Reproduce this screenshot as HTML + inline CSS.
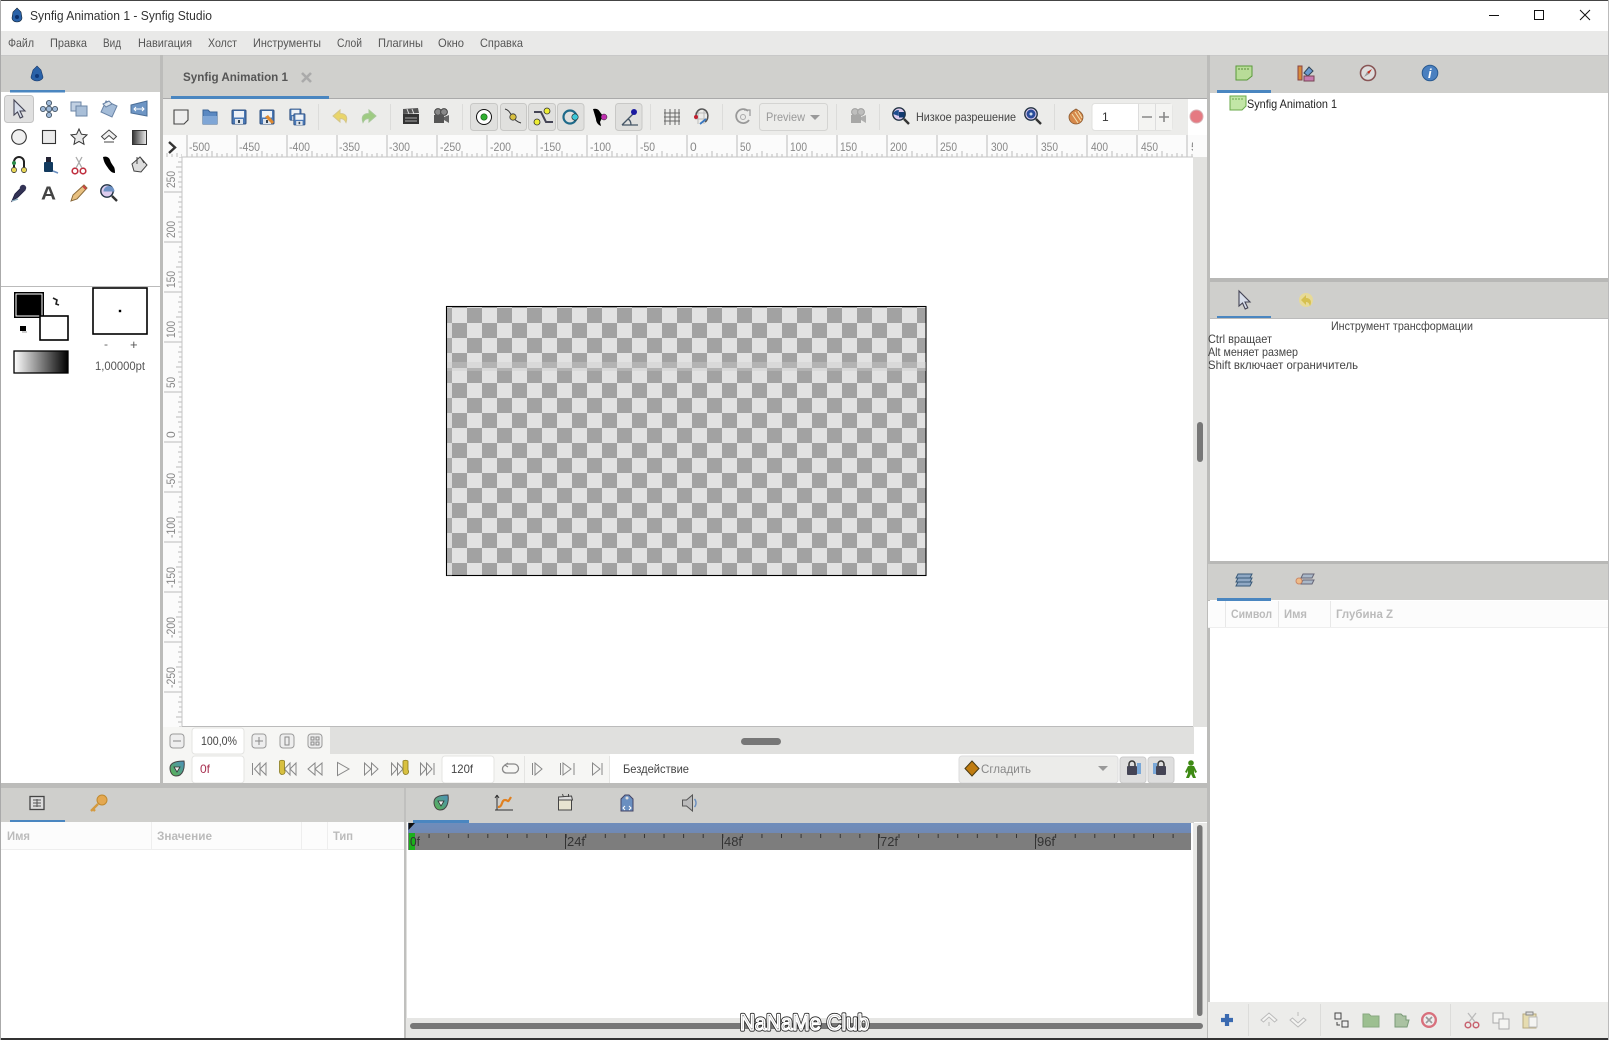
<!DOCTYPE html>
<html lang="ru"><head><meta charset="utf-8"><title>Synfig Animation 1 - Synfig Studio</title>
<style>
html,body{margin:0;padding:0;background:#fff;width:1609px;height:1040px;overflow:hidden}
svg{display:block;position:absolute;left:0;top:0;filter:blur(.3px)}
text{font-family:"Liberation Sans","Noto Sans CJK SC",sans-serif;font-size:12px;fill:#444}
.m{font-size:12px;fill:#555}
.r{font-size:12px;fill:#888}
.h{font-size:12px;font-weight:bold;fill:#bbb}
.f{font-size:13px;fill:#333}
</style></head><body>
<svg width="1609" height="1040" viewBox="0 0 1609 1040" xmlns="http://www.w3.org/2000/svg">
<defs>
<pattern id="hr" x="186.5" y="135" width="50" height="22" patternUnits="userSpaceOnUse">
<path d="M.5 0V22M5.500 19V22M10.500 18V22M15.500 19V22M20.500 18V22M25.500 16V22M30.500 18V22M35.500 19V22M40.500 18V22M45.500 19V22" stroke="#bbb" fill="none"/></pattern>
<pattern id="vr" x="164" y="191.5" width="18" height="50" patternUnits="userSpaceOnUse">
<path d="M0 .5H18M15 5.500H18M14 10.500H18M15 15.500H18M14 20.500H18M12 25.500H18M14 30.500H18M15 35.500H18M14 40.500H18M15 45.500H18" stroke="#bbb" fill="none"/></pattern>
<pattern id="chk" x="452" y="308" width="30" height="30" patternUnits="userSpaceOnUse">
<rect width="30" height="30" fill="#e2e2e2"/><rect x="15" width="15" height="15" fill="#a2a2a2"/><rect y="15" width="15" height="15" fill="#a2a2a2"/></pattern>
<pattern id="tt" x="409" y="834" width="19.58" height="4" patternUnits="userSpaceOnUse"><rect x="0" width="1" height="4" fill="#333"/></pattern>
<linearGradient id="gw" x1="0" x2="1" y1="0" y2="0"><stop offset="0" stop-color="#fff"/><stop offset="1" stop-color="#000"/></linearGradient>
<linearGradient id="gb" x1="0" x2="1" y1="0" y2="0"><stop offset="0" stop-color="#333"/><stop offset="1" stop-color="#eee"/></linearGradient>
<linearGradient id="tg" x1="0" x2="0" y1="0" y2="1"><stop offset="0" stop-color="#6f8dbb"/><stop offset="1" stop-color="#7089b4"/></linearGradient>
<linearGradient id="leaf" x1="0" x2="1" y1="1" y2="0"><stop offset="0" stop-color="#5cb548"/><stop offset="1" stop-color="#4a8fc0"/></linearGradient>
<g id="ptr"><path d="M-5-9V6l3.500-3 2.700 6 2.600-1.200L1 2h5z" fill="#d8deea" stroke="#445" stroke-width="1.100"/></g>
<g id="floppy"><rect x="-7" y="-7" width="14" height="14" rx="1" fill="#4a78b5" stroke="#2e4f80"/><rect x="-5" y="-6" width="10" height="6.500" fill="#eef2f7"/><rect x="-4" y="2" width="8" height="5" fill="#dfe5ec"/><rect x="-1" y="3" width="2" height="3" fill="#345"/></g>
<g id="folder"><path d="M-7-7h5l2 2h7v12h-14z" fill="#5b89c2" stroke="#3a6396"/><path d="M-7-1h14v8h-14z" fill="#7fa6d6"/></g>
<g id="leafi"><path d="M-7-1C-7-6-2-8 7-8 8-1 6 7-1 7-5 7-7 3-7-1z" fill="url(#leaf)" stroke="#444" stroke-width="1"/><path d="M-3-2 3-2 0 3z" fill="#eee" stroke="#333" stroke-width=".8"/></g>
<g id="cam"><circle cx="-3" cy="-5" r="3.400" fill="#888" stroke="#444"/><circle cx="3" cy="-5" r="3.400" fill="#888" stroke="#444"/><rect x="-7" y="-2" width="10" height="8" fill="#555"/><path d="M3 0 8-2V6L3 3z" fill="#666"/></g>
<g id="lens"><circle cx="-2" cy="-2" r="6.200" fill="#dce" stroke="#234" stroke-width="1.400"/><path d="M3 3 8 8" stroke="#333" stroke-width="2.400"/></g>
<g id="lock"><path d="M-3-3V-5a3 3 0 0 1 6 0V-3" fill="none" stroke="#333" stroke-width="1.500"/><rect x="-5" y="-3" width="10" height="9" rx="1" fill="#445"/></g>
</defs>

<!-- chrome -->
<rect width="1609" height="1040" fill="#fff"/>
<rect y="31" width="1609" height="24" fill="#e9e9e8"/>
<rect y="55" width="1609" height="1" fill="#c8c8c8"/>

<!-- left panel -->
<rect x="1" y="56" width="159" height="36" fill="#cfcfcc"/>
<rect x="10" y="90" width="55" height="2.500" fill="#4a86c0"/>
<rect x="1" y="286" width="159" height="1" fill="#bbb"/>
<rect x="160" y="55" width="3" height="728" fill="#bcbcba"/>

<!-- center -->
<rect x="163" y="56" width="1044" height="42" fill="#d0d0cd"/>
<rect x="163" y="98" width="1044" height="1" fill="#aaa"/>
<rect x="171" y="96" width="158" height="3" fill="#4a86c0"/>
<rect x="163" y="99" width="1025" height="36" fill="#ececea"/>
<rect x="163" y="135" width="1044" height="22" fill="#fbfbfb"/>
<rect x="164" y="135" width="1029" height="22" fill="url(#hr)"/>
<rect x="182" y="135" width="4" height="22" fill="#fbfbfb"/>
<rect x="163" y="157" width="19" height="570" fill="#fbfbfb"/>
<rect x="164" y="157" width="18" height="570" fill="url(#vr)"/>
<rect x="182" y="157" width="1011" height="569" fill="#fff"/>
<rect x="182" y="156.500" width="1011" height="1" fill="#c4c4c4"/>
<rect x="181.500" y="157" width="1" height="569" fill="#c4c4c4"/>
<rect x="182" y="726" width="1012" height="1" fill="#bbb"/>
<rect x="1193" y="157" width="14" height="570" fill="#e2e2e0"/>
<rect x="1197" y="422" width="6" height="40" rx="3" fill="#777"/>
<rect x="330" y="727" width="864" height="27" fill="#e0e0de"/>
<rect x="741" y="738" width="40" height="7" rx="3.500" fill="#777"/>
<rect x="163" y="727" width="167" height="27" fill="#f6f6f4"/>
<rect x="163" y="754" width="447" height="29" fill="#f6f6f4"/>

<!-- rulers text -->
<g>
<text class="r" x="189" y="151" textLength="21" lengthAdjust="spacingAndGlyphs">-500</text>
<text class="r" x="239" y="151" textLength="21" lengthAdjust="spacingAndGlyphs">-450</text>
<text class="r" x="289" y="151" textLength="21" lengthAdjust="spacingAndGlyphs">-400</text>
<text class="r" x="339" y="151" textLength="21" lengthAdjust="spacingAndGlyphs">-350</text>
<text class="r" x="389" y="151" textLength="21" lengthAdjust="spacingAndGlyphs">-300</text>
<text class="r" x="440" y="151" textLength="21" lengthAdjust="spacingAndGlyphs">-250</text>
<text class="r" x="490" y="151" textLength="21" lengthAdjust="spacingAndGlyphs">-200</text>
<text class="r" x="540" y="151" textLength="21" lengthAdjust="spacingAndGlyphs">-150</text>
<text class="r" x="590" y="151" textLength="21" lengthAdjust="spacingAndGlyphs">-100</text>
<text class="r" x="640" y="151" textLength="15" lengthAdjust="spacingAndGlyphs">-50</text>
<text class="r" x="690" y="151">0</text>
<text class="r" x="740" y="151" textLength="11" lengthAdjust="spacingAndGlyphs">50</text>
<text class="r" x="790" y="151" textLength="17" lengthAdjust="spacingAndGlyphs">100</text>
<text class="r" x="840" y="151" textLength="17" lengthAdjust="spacingAndGlyphs">150</text>
<text class="r" x="890" y="151" textLength="17" lengthAdjust="spacingAndGlyphs">200</text>
<text class="r" x="940" y="151" textLength="17" lengthAdjust="spacingAndGlyphs">250</text>
<text class="r" x="991" y="151" textLength="17" lengthAdjust="spacingAndGlyphs">300</text>
<text class="r" x="1041" y="151" textLength="17" lengthAdjust="spacingAndGlyphs">350</text>
<text class="r" x="1091" y="151" textLength="17" lengthAdjust="spacingAndGlyphs">400</text>
<text class="r" x="1141" y="151" textLength="17" lengthAdjust="spacingAndGlyphs">450</text>
<text class="r" x="1191" y="151">5</text>
<rect x="1193" y="135" width="14" height="22" fill="#fbfbfb"/>
<text class="r" transform="translate(175,188) rotate(-90)" textLength="17" lengthAdjust="spacingAndGlyphs">250</text>
<text class="r" transform="translate(175,238) rotate(-90)" textLength="17" lengthAdjust="spacingAndGlyphs">200</text>
<text class="r" transform="translate(175,288) rotate(-90)" textLength="17" lengthAdjust="spacingAndGlyphs">150</text>
<text class="r" transform="translate(175,338) rotate(-90)" textLength="17" lengthAdjust="spacingAndGlyphs">100</text>
<text class="r" transform="translate(175,388) rotate(-90)" textLength="11" lengthAdjust="spacingAndGlyphs">50</text>
<text class="r" transform="translate(175,438) rotate(-90)">0</text>
<text class="r" transform="translate(175,488) rotate(-90)" textLength="15" lengthAdjust="spacingAndGlyphs">-50</text>
<text class="r" transform="translate(175,538) rotate(-90)" textLength="21" lengthAdjust="spacingAndGlyphs">-100</text>
<text class="r" transform="translate(175,588) rotate(-90)" textLength="21" lengthAdjust="spacingAndGlyphs">-150</text>
<text class="r" transform="translate(175,638) rotate(-90)" textLength="21" lengthAdjust="spacingAndGlyphs">-200</text>
<text class="r" transform="translate(175,688) rotate(-90)" textLength="21" lengthAdjust="spacingAndGlyphs">-250</text>
</g>
<path d="M169 142 L175 147.500 L169 153" fill="none" stroke="#333" stroke-width="2.400"/>

<!-- canvas checker -->
<rect x="446.500" y="306.500" width="479.500" height="269" fill="url(#chk)" stroke="#000" stroke-width="1.100"/>
<rect x="447" y="362" width="479" height="9" fill="#ccc" opacity=".4"/>
<rect x="447" y="307" width="5" height="269" fill="#c8c8c8" opacity=".25"/>

<!-- title bar -->
<path d="M17 8l4 4 1 6c0 2-2 4-5 4s-5-2-5-4l1-6z" fill="#2a62a8" stroke="#123" stroke-width=".6"/><circle cx="17" cy="17" r="2" fill="#0b2f6a"/>
<text x="30" y="20" style="font-size:13px;fill:#333" textLength="182" lengthAdjust="spacingAndGlyphs">Synfig Animation 1 - Synfig Studio</text>
<path d="M1489 15.500H1499" stroke="#111" stroke-width="1"/>
<rect x="1534.500" y="10.500" width="9" height="9" fill="none" stroke="#111"/>
<path d="M1580 10 L1590 20 M1590 10 L1580 20" stroke="#111" stroke-width="1"/>

<!-- menu -->
<text class="m" x="8" y="47" textLength="26" lengthAdjust="spacingAndGlyphs">Файл</text>
<text class="m" x="50" y="47" textLength="37" lengthAdjust="spacingAndGlyphs">Правка</text>
<text class="m" x="103" y="47" textLength="18" lengthAdjust="spacingAndGlyphs">Вид</text>
<text class="m" x="138" y="47" textLength="54" lengthAdjust="spacingAndGlyphs">Навигация</text>
<text class="m" x="208" y="47" textLength="29" lengthAdjust="spacingAndGlyphs">Холст</text>
<text class="m" x="253" y="47" textLength="68" lengthAdjust="spacingAndGlyphs">Инструменты</text>
<text class="m" x="337" y="47" textLength="25" lengthAdjust="spacingAndGlyphs">Слой</text>
<text class="m" x="378" y="47" textLength="45" lengthAdjust="spacingAndGlyphs">Плагины</text>
<text class="m" x="438" y="47" textLength="26" lengthAdjust="spacingAndGlyphs">Окно</text>
<text class="m" x="480" y="47" textLength="43" lengthAdjust="spacingAndGlyphs">Справка</text>

<!-- left tab icon -->
<path d="M37 66l4 4 2 7c0 2-3 4-6 4s-6-2-6-4l2-7z" fill="#2a62a8" stroke="#1a3a6a" stroke-width=".6"/><circle cx="37" cy="76" r="2" fill="#103a7a"/>
<!-- tab label -->
<text x="183" y="81" style="font-size:12px;font-weight:bold;fill:#555" textLength="105" lengthAdjust="spacingAndGlyphs">Synfig Animation 1</text>
<path d="M302 73 L311 82 M311 73 L302 82" stroke="#aaa" stroke-width="2.600"/>

<!-- tool grid -->
<rect x="4.500" y="95.500" width="29" height="27" rx="3" fill="#e0e0e0" stroke="#c4c4c4"/>
<use href="#ptr" x="19" y="109"/>
<g transform="translate(49,109)" stroke="#456" fill="#9fb9d8" stroke-width=".9"><path d="M-5 0H5M0-5V5" stroke-width="3" stroke="#b5c8de"/><circle cx="0" cy="-6" r="2.600"/><circle cx="0" cy="6" r="2.600"/><circle cx="-6" cy="0" r="2.600"/><circle cx="6" cy="0" r="2.600"/><circle r="2.800"/></g>
<g transform="translate(79,109)" stroke="#6a84a6" fill="#c1d0e2"><rect x="-8" y="-7" width="10" height="9"/><rect x="-3" y="-3" width="11" height="10" fill="#a9bfd8"/></g>
<g transform="translate(109,109)" stroke="#6a84a6" fill="#a4bcd8"><path d="M-3-8 8-3 3 8-8 3z"/><path d="M-6-5 0-8 3-5-3-2z" fill="#dfe7f0"/></g>
<g transform="translate(139,109)"><path d="M-8-4 8-8V7L-8 4z" fill="#6d95c4" stroke="#4a6d96"/><path d="M-5 0H5M-3-2-5 0-3 2M3-2 5 0 3 2" stroke="#fff" fill="none"/></g>
<circle cx="19" cy="137" r="7.300" fill="#f0f0f0" stroke="#333" stroke-width="1.100"/>
<rect x="42.500" y="130.500" width="13" height="13" fill="#ebebeb" stroke="#333" stroke-width="1.100"/>
<path d="M79 129l2.400 5.200 5.600.7-4.100 3.800 1.100 5.600-5-2.800-5 2.800 1.100-5.600-4.100-3.800 5.600-.7z" fill="#e8e8e8" stroke="#333"/>
<path d="M109 130l7.500 6.500-3 3-4.500-4-4.500 4-3-3z M104 142h10" fill="#f0f0f0" stroke="#444"/>
<rect x="132.500" y="130.500" width="14" height="14" fill="url(#gb)" stroke="#333"/>
<g transform="translate(19,165)"><path d="M-5 8V-3a5 5 0 0 1 10 0V8" fill="none" stroke="#222" stroke-width="2"/><circle cx="-5" cy="5" r="2.600" fill="#e6d455" stroke="#333" stroke-width=".7"/><circle cx="5" cy="5" r="2.600" fill="#e6d455" stroke="#333" stroke-width=".7"/><circle cx="-5" cy="-2" r="2" fill="#2a8a4a"/></g>
<g transform="translate(49,165)"><rect x="-5" y="-3" width="9" height="10" rx="1" fill="#123a5e"/><rect x="-3" y="-8" width="5" height="5" fill="#223"/><path d="M4 6 9 8" stroke="#6a8fc0" stroke-width="1.500"/></g>
<g transform="translate(79,165)" fill="none" stroke="#c03040" stroke-width="1.600"><circle cx="-4" cy="6" r="2.800"/><circle cx="4" cy="6" r="2.800"/><path d="M-3 3 3-8M3 3-3-8" stroke="#aaa" stroke-width="1.300"/></g>
<path d="M103 157c3-1 6 0 7 3 1 3 2 4 4 7 1 2 1 5 1 6-3 0-5-2-7-5-2-3-4-5-5-11z" fill="#000"/>
<g transform="translate(139,165)"><path d="M-7-1 1-8 8 0 2 7-5 6z" fill="#ddd" stroke="#444"/><path d="M-2-8V-1M2-7l3 5" stroke="#444"/></g>
<g transform="translate(19,193)"><path d="M-7 8-4 1 3-6 6-3-1 4z" fill="#335" stroke="#224"/><circle cx="4" cy="-5" r="3.200" fill="#335"/><path d="M-7 8-1 6" stroke="#8ab" stroke-width="1.200"/></g>
<text x="41" y="199.500" style="font-size:18px;font-weight:bold;fill:#444" textLength="15" lengthAdjust="spacingAndGlyphs">A</text>
<g transform="translate(79,193)"><path d="M-8 8-6 2 5-8 8-5-2 6z" fill="#e8c080" stroke="#8a6a3a"/><path d="M4-7 7-4" stroke="#c44" stroke-width="2"/></g>
<use href="#lens" x="109" y="193"/><path d="M103.500 191.500a5 5 0 0 1 11 0z" fill="#6f93c6"/>

<!-- colors -->
<rect x="15" y="293" width="28" height="24" fill="#000" stroke="#000" stroke-width="2"/>
<rect x="16" y="294" width="26" height="22" fill="#000" stroke="#fff" stroke-width="1"/>
<rect x="40" y="316" width="28" height="24" fill="#fff" stroke="#000" stroke-width="1.600"/>
<path d="M53 298l4 2-1 4 3 1" fill="none" stroke="#222" stroke-width="1.600"/>
<rect x="20" y="326" width="6" height="5" fill="#000"/><rect x="22" y="331" width="5" height="2" fill="#ccc"/>
<rect x="14" y="351" width="54" height="22" fill="url(#gw)" stroke="#000" stroke-width="1.300"/>
<rect x="93" y="288" width="54" height="46" fill="#fff" stroke="#000" stroke-width="1.600"/>
<rect x="118.800" y="309.800" width="2.400" height="2.400" fill="#000"/>
<text x="104" y="348" style="fill:#666">-</text>
<text x="130" y="349" style="font-size:13px;fill:#555">+</text>
<text x="95" y="370" style="fill:#555" textLength="50" lengthAdjust="spacingAndGlyphs">1,00000pt</text>

<!-- toolbar -->
<g transform="translate(181,117)"><path d="M-7-7H7V3L3 7H-7z" fill="#eee" stroke="#444" stroke-width="1.100"/></g>
<use href="#folder" x="210" y="117"/>
<use href="#floppy" x="239" y="117"/>
<use href="#floppy" x="267" y="117"/><path d="M265 117 l7 7 2-2-6-7z" fill="#e08a30"/>
<g transform="translate(297,117) scale(.8)"><use href="#floppy" x="-2" y="-3"/><use href="#floppy" x="3" y="3"/></g>
<path d="M318.500 104V130M390.500 104V130M462.500 104V130M650.500 104V130M722.500 104V130M836.500 104V130M879.500 104V130M1054.500 104V130" stroke="#dcdcda"/>
<path d="M333 116l7-6v3.500c6 0 8 3.500 6 9-1.500-3-3-4-6-4v3.500z" fill="#e9d56a" stroke="#d4c68a"/>
<path d="M376 116l-7-6v3.500c-6 0-8 3.500-6 9 1.500-3 3-4 6-4v3.500z" fill="#9ecb82" stroke="#a8c89a"/>
<g transform="translate(411,117)"><rect x="-8" y="-3" width="16" height="10" fill="#333"/><path d="M-8-8 7-9 8-4-8-3z" fill="#555"/><path d="M-4-8-2-3M1-8 3-3" stroke="#ddd"/><path d="M-6 1H6M-6 4H6" stroke="#aaa"/></g>
<use href="#cam" x="441" y="117"/>
<g fill="#e0e0de" stroke="#c8c8c6"><rect x="470.500" y="103.500" width="27" height="27" rx="3"/><rect x="500.500" y="103.500" width="26" height="27" rx="3"/><rect x="528.500" y="103.500" width="27" height="27" rx="3"/><rect x="557.500" y="103.500" width="26.500" height="27" rx="3"/><rect x="615.500" y="103.500" width="26.500" height="27" rx="3"/></g>
<circle cx="484" cy="117" r="7.500" fill="#fff" stroke="#111"/><circle cx="484" cy="117" r="3.200" fill="#2fb02f" stroke="#1a5a1a" stroke-width=".6"/>
<path d="M505 109c4 1 5 4 7 7 2 3 5 6 9 7" fill="none" stroke="#333"/><circle cx="513" cy="117" r="3.200" fill="#d8c040" stroke="#333" stroke-width=".8"/>
<path d="M534 112h7l5 10h7" fill="none" stroke="#445" stroke-width="2"/><circle cx="547" cy="111" r="3" fill="#ee3" stroke="#333" stroke-width=".8"/><circle cx="537" cy="122" r="3" fill="#ee3" stroke="#333" stroke-width=".8"/>
<circle cx="570" cy="117" r="6.500" fill="none" stroke="#1e6a8a" stroke-width="2.200"/><circle cx="575" cy="117" r="3.200" fill="#3cc8d8" stroke="#222" stroke-width=".6"/>
<path d="M593 109c4-1 6 1 7 3l3 4-3 6 1 4c-3-1-5-4-5-7z" fill="#000"/><circle cx="604" cy="117" r="3" fill="#c030b0" stroke="#222" stroke-width=".5"/>
<path d="M622 125h16M622 125 l12-12M631 125c0-3-1-5-3-6" fill="none" stroke="#456" stroke-width="1.300"/><circle cx="634" cy="112" r="3" fill="#1a1aa0"/>
<path d="M665 109V125M670 109V125M675 109V125M679 109V125M664 113H680M664 117H680M664 121H680" stroke="#666" fill="none"/>
<g transform="translate(701,117)"><path d="M-6-4H6M-6 2H6M-3-7V7M3-7V7" stroke="#bbb"/><path d="M-5 0a6 7 0 1 1 9 5" fill="none" stroke="#555" stroke-width="1.500"/><circle cx="-5" cy="0" r="2" fill="#c02030"/><path d="M5 2-1 7" stroke="#3a78c0" stroke-width="1.800"/></g>
<g transform="translate(743,117)"><path d="M5-6A7 7 0 1 0 6 3" fill="none" stroke="#999" stroke-width="1.800"/><path d="M1-7H7V-1" fill="none" stroke="#999" stroke-width="1.200"/><circle r="2.500" fill="none" stroke="#aaa"/></g>
<rect x="759.500" y="103.500" width="68" height="27" rx="3" fill="#ececea" stroke="#d4d4d2"/>
<text x="766" y="121" style="fill:#999" textLength="39" lengthAdjust="spacingAndGlyphs">Preview</text>
<path d="M810 115h10l-5 5z" fill="#999"/>
<use href="#cam" x="858" y="117" opacity=".45"/>
<use href="#lens" x="901" y="116"/><path d="M899 112h5.500v5.500h-5.500z" fill="#123a70"/><path d="M893 114a6 6 0 0 1 5.800-4v6z" fill="#1f4f90"/>
<text x="916" y="121" style="fill:#444" textLength="100" lengthAdjust="spacingAndGlyphs">Низкое разрешение</text>
<use href="#lens" x="1033" y="116"/><circle cx="1031" cy="114" r="4.500" fill="#2a4c9a"/><circle cx="1031" cy="114" r="1.500" fill="#cde"/>
<g transform="translate(1076,117)"><path d="M0-8c5 3 7 5 7 8 0 4-3 7-7 7s-7-3-7-7c0-3 2-5 7-8z" fill="#d6884a" stroke="#8a5a30" stroke-width=".8"/><path d="M-4-3 2 6M-1-5 5 4M2-6 6 1" stroke="#f4e0b0" fill="none"/></g>
<rect x="1092" y="103.500" width="80" height="27" rx="3" fill="#fff" stroke="#e0e0de"/>
<rect x="1138" y="104" width="34" height="26" fill="#f4f4f2"/>
<path d="M1138.500 104V130M1155.500 104V130" stroke="#ddd"/>
<text x="1102" y="121" style="fill:#333">1</text>
<path d="M1142 117H1152M1159 117H1169M1164 112V122" stroke="#888" stroke-width="1.600"/>
<circle cx="1196.500" cy="116.500" r="6.500" fill="#e57a82" stroke="#d8b0b4"/>

<!-- zoom row -->
<g fill="#eee" stroke="#999"><rect x="170" y="734" width="14" height="14" rx="3"/><rect x="252" y="734" width="14" height="14" rx="3"/><rect x="280" y="734" width="14" height="14" rx="3"/><rect x="308" y="734" width="14" height="14" rx="3"/></g>
<path d="M173 741H181M255 741H263M259 737V745M285 737H289V745H285zM311 737h3v3h-3zM316 737h3v3h-3zM311 742h3v3h-3zM316 742h3v3h-3z" stroke="#888" fill="none"/>
<rect x="192" y="728" width="52" height="26" rx="3" fill="#fff" stroke="#e4e4e2"/>
<text x="201" y="745" style="fill:#444" textLength="36" lengthAdjust="spacingAndGlyphs">100,0%</text>

<!-- play row -->
<use href="#leafi" x="177" y="769"/>
<rect x="192" y="756" width="52" height="27" rx="3" fill="#fff" stroke="#e4e4e2"/>
<text x="200" y="773" style="fill:#a83050" textLength="10" lengthAdjust="spacingAndGlyphs">0f</text>
<g fill="#f6f6f4" stroke="#888" stroke-width="1">
<path d="M252.500 763V775M260 763 254.500 769 260 775ZM266 763 260 769 266 775Z"/>
<path d="M290 763 284.500 769 290 775ZM296 763 290 769 296 775Z"/>
<path d="M315 763 308 769 315 775ZM322 763 315 769 322 775Z"/>
<path d="M337.500 762.500V775.500L349 769Z"/>
<path d="M364.500 763 371 769 364.500 775ZM371.500 763 378 769 371.500 775Z"/>
<path d="M391.500 763 397 769 391.500 775ZM397.500 763 403 769 397.500 775Z"/>
<path d="M420.500 763 426 769 420.500 775ZM426.500 763 432 769 426.500 775ZM434 763V775"/>
<path d="M532.500 763V775M535 763 542 769 535 775Z"/>
<path d="M560.500 763V775M563 763 571 769 563 775ZM574 763V775"/>
<path d="M592.500 763 600 769 592.500 775ZM602 763V775"/>
</g>
<path d="M279.500 761c1-1 4-1 5 0v9a2.800 2.800 0 1 1-5 2z" fill="#d8c040" stroke="#887a20" stroke-width=".8"/>
<path d="M403 761c1-1 4-1 5 0v9a2.800 2.800 0 1 1-5 2z" fill="#d8c040" stroke="#887a20" stroke-width=".8"/>
<rect x="442" y="756" width="52" height="27" rx="3" fill="#fff" stroke="#e4e4e2"/>
<text x="451" y="773" style="fill:#444" textLength="22" lengthAdjust="spacingAndGlyphs">120f</text>
<path d="M507 764h7a4 4 0 0 1 0 9h-7a4 4 0 0 1-1-8M508 763l-3 2 3 2" fill="none" stroke="#888" stroke-width="1.300"/>
<path d="M524.500 756V783" stroke="#e4e4e2"/><path d="M609.500 756V783" stroke="#e4e4e2"/>
<text x="623" y="773" style="fill:#444" textLength="66" lengthAdjust="spacingAndGlyphs">Бездействие</text>
<rect x="959" y="756" width="159" height="27" rx="3" fill="#ececea" stroke="#ddd"/>
<path d="M972 761 979 768.500 972 776 965 768.500Z" fill="#c07c10" stroke="#4a3a10"/>
<text x="981" y="773" style="fill:#888" textLength="50" lengthAdjust="spacingAndGlyphs">Сгладить</text>
<path d="M1098 766h10l-5 5z" fill="#999"/>
<rect x="1120" y="757" width="26" height="26" rx="3" fill="#dedede" stroke="#ccc"/>
<rect x="1148" y="757" width="26" height="26" rx="3" fill="#dedede" stroke="#ccc"/>
<rect x="1137" y="763" width="4" height="11" fill="#7aa8d8"/><use href="#lock" x="1132" y="769"/>
<rect x="1153" y="763" width="4" height="11" fill="#7aa8d8"/><use href="#lock" x="1161" y="769"/>
<g transform="translate(1191,769)" fill="#3e8a14"><circle cy="-6" r="2.800"/><path d="M-3-3H3L6 3 4 4 3 1V4L5 9H2L0 5-2 9H-5L-3 4V1L-4 4-6 3Z"/></g>

<!-- separators lower -->
<rect y="783" width="1207" height="5" fill="#bcbcba"/>
<rect x="1" y="788" width="403" height="34" fill="#cfcfcc"/>
<rect x="10" y="820" width="55" height="2.500" fill="#4a86c0"/>
<rect x="1" y="822" width="403" height="27" fill="#fcfcfc"/>
<rect x="1" y="849" width="403" height="1" fill="#eee"/>
<path d="M151.500 822V849M301.500 822V849M327.500 822V849" stroke="#eee"/>
<rect x="404" y="788" width="2.500" height="250" fill="#c0c0be"/>
<rect x="406" y="788" width="801" height="34" fill="#cfcfcc"/>
<text class="h" x="7" y="840" textLength="23" lengthAdjust="spacingAndGlyphs">Имя</text>
<text class="h" x="157" y="840" textLength="55" lengthAdjust="spacingAndGlyphs">Значение</text>
<text class="h" x="333" y="840" textLength="20" lengthAdjust="spacingAndGlyphs">Тип</text>
<g transform="translate(37,803)"><rect x="-7" y="-6.500" width="14" height="13" fill="#ddd" stroke="#444" stroke-width="1.300"/><path d="M-4-3H4M-4 0H4M-4 3H4M0-4V4" stroke="#555"/></g>
<g transform="translate(99,803)"><circle cx="3" cy="-3" r="5" fill="#e4a850" stroke="#c08a30"/><path d="M-1 1-8 8M-6 6-4 8" stroke="#d49a40" stroke-width="2.400"/></g>

<!-- timeline -->
<rect x="408" y="820" width="786" height="3" fill="#cfcfcc"/>
<rect x="413" y="820" width="56" height="3" fill="#4a86c0"/>
<rect x="408" y="823" width="783" height="10" fill="url(#tg)"/>
<rect x="408" y="833" width="783" height="17" fill="#7d7d7d"/>
<rect x="409" y="833" width="6" height="17" fill="#1cb01c"/>
<path d="M408.500 823H415L408.500 830Z" fill="#111"/>
<rect x="425" y="834" width="760" height="4" fill="url(#tt)"/>
<path d="M565.500 834V849M722.500 834V849M878.500 834V849M1035.500 834V849" stroke="#333"/>
<text class="f" x="410" y="846" textLength="10" lengthAdjust="spacingAndGlyphs">0f</text>
<text class="f" x="567" y="846" textLength="18" lengthAdjust="spacingAndGlyphs">24f</text>
<text class="f" x="724" y="846" textLength="18" lengthAdjust="spacingAndGlyphs">48f</text>
<text class="f" x="880" y="846" textLength="18" lengthAdjust="spacingAndGlyphs">72f</text>
<text class="f" x="1037" y="846" textLength="18" lengthAdjust="spacingAndGlyphs">96f</text>
<rect x="1193" y="823" width="14" height="215" fill="#e8e8e6"/>
<rect x="1197" y="825" width="5.500" height="191" rx="2.700" fill="#777"/>
<rect x="406" y="1018" width="801" height="20" fill="#e6e6e4"/>
<rect x="410" y="1023" width="793" height="6" rx="3" fill="#777"/>
<use href="#leafi" x="441" y="803"/>
<g transform="translate(504,803)"><path d="M-7-8V7H8M-9 7H9M-7-8-9-5M-7-8-5-5" fill="none" stroke="#333"/><path d="M-6 4C-1 4-3-3 1-3S3 1 7-6" fill="none" stroke="#e08020" stroke-width="2.200"/></g>
<g transform="translate(565.500,803)"><rect x="-7" y="-3" width="13" height="10" fill="#e8e4d0" stroke="#444"/><path d="M-7-6 6-7 7-3-7-3zM-3-9-2-6M3-9 3-6" fill="#ddd" stroke="#444"/></g>
<g transform="translate(627,803)"><path d="M-6-4-2-8H2L6-4V8H-6Z" fill="#6a8fc0" stroke="#446"/><path d="M-2 3-4 5-2 7M2 3 4 5 2 7" stroke="#fff" fill="none"/><circle cy="-5" r="1.500" fill="#ddd"/></g>
<g transform="translate(689.500,803)"><path d="M-7-3H-3L3-8V8L-3 3H-7Z" fill="#bbb" stroke="#555"/><path d="M5-4a6 6 0 0 1 0 8" fill="none" stroke="#6a8fc0" stroke-width="1.400"/></g>

<!-- right panels -->
<rect x="1207" y="55" width="3" height="985" fill="#bcbcba"/>
<rect x="1210" y="56" width="398" height="37" fill="#cfcfcc"/>
<rect x="1217" y="90" width="54" height="3" fill="#4a86c0"/>
<rect x="1210" y="278" width="398" height="4" fill="#b8b8b6"/>
<rect x="1210" y="282" width="398" height="36" fill="#cfcfcc"/>
<rect x="1217" y="316" width="54" height="3" fill="#4a86c0"/>
<rect x="1208" y="318" width="400" height="1" fill="#bbb"/>
<rect x="1210" y="561" width="398" height="3.500" fill="#b8b8b6"/>
<rect x="1208" y="564" width="400" height="36" fill="#cfcfcc"/>
<rect x="1217" y="598" width="54" height="3" fill="#4a86c0"/>
<rect x="1208" y="601" width="400" height="26" fill="#fcfcfc"/>
<rect x="1208" y="627" width="400" height="1" fill="#eee"/>
<path d="M1225.500 601V627M1278.500 601V627M1330.500 601V627" stroke="#e8e8e8"/>
<text class="h" x="1231" y="618" textLength="41" lengthAdjust="spacingAndGlyphs">Символ</text>
<text class="h" x="1284" y="618" textLength="23" lengthAdjust="spacingAndGlyphs">Имя</text>
<text class="h" x="1336" y="618" textLength="57" lengthAdjust="spacingAndGlyphs">Глубина Z</text>
<g transform="translate(1244,73)"><path d="M-8-7H8V3L3 7H-8Z" fill="#b8dc98" stroke="#5a9a3a"/><path d="M-6-4H6" stroke="#5a8a3a" stroke-dasharray="2 1"/></g>
<g transform="translate(1306,73)"><rect x="-8" y="-7" width="4" height="14" fill="#d88a3a" stroke="#844"/><path d="M-2 0 3-6 7-2 2 3z" fill="#6a9ad0" stroke="#345"/><rect x="-2" y="3" width="10" height="5" fill="#c87ab0" stroke="#745"/></g>
<g transform="translate(1368,73)"><circle r="7.500" fill="#ddd" stroke="#855" stroke-width="1.600"/><path d="M4-4-1-1 1 1z" fill="#c03020"/><path d="M-4 4-1-1 1 1z" fill="#999"/></g>
<g transform="translate(1430,73)"><circle r="7.800" fill="#4a80c0" stroke="#2a5a90"/><text x="-2" y="5" style="font-size:13px;font-weight:bold;font-style:italic;fill:#fff">i</text></g>
<path d="M1230 96H1246V106L1242 110H1230Z" fill="#c2e6a6" stroke="#6aa84a"/><path d="M1232 99H1244" stroke="#6aa84a" stroke-dasharray="2 1"/>
<text x="1247" y="108" style="font-size:12px;fill:#222" textLength="90" lengthAdjust="spacingAndGlyphs">Synfig Animation 1</text>
<use href="#ptr" x="1244" y="300"/>
<g transform="translate(1306,300)"><circle r="7" fill="#ecdc8a" opacity=".8"/><path d="M-5 0 0-5V-2C5-2 6 2 4 6 3 3 2 2 0 2V5Z" fill="#d6c050"/></g>
<text x="1331" y="330" style="font-size:12px;fill:#444" textLength="142" lengthAdjust="spacingAndGlyphs">Инструмент трансформации</text>
<text x="1208" y="343" style="font-size:12px;fill:#444" textLength="64" lengthAdjust="spacingAndGlyphs">Ctrl вращает</text>
<text x="1208" y="356" style="font-size:12px;fill:#444" textLength="90" lengthAdjust="spacingAndGlyphs">Alt меняет размер</text>
<text x="1208" y="369" style="font-size:12px;fill:#444" textLength="150" lengthAdjust="spacingAndGlyphs">Shift включает ограничитель</text>
<g transform="translate(1244,581)" fill="#8fa8c4" stroke="#3a5a78"><path d="M-6-7H8L6-3H-8Z"/><path d="M-6-3H8L6 1H-8Z"/><path d="M-6 1H8L6 5H-8Z"/></g>
<g transform="translate(1306,581)" fill="#aab8c8" stroke="#667"><path d="M-3-7H8L6-3H-5Z"/><path d="M-3-1H8L6 3H-5Z"/><circle cx="-7" cy="0" r="3" fill="#eebb88" stroke="#c86"/></g>

<!-- right bottom toolbar -->
<rect x="1208" y="1002" width="400" height="36" fill="#ececea"/>
<path d="M1248.500 1004V1036M1320.500 1004V1036M1450.500 1004V1036" stroke="#dcdcda"/>
<path d="M1227 1014v12M1221 1020h12" stroke="#3a6ab0" stroke-width="4.200"/>
<path d="M1269 1013l8 7-2.500 2-5.500-5-5.500 5-2.500-2zM1269 1022v4" fill="#f4f4f2" stroke="#bbb"/>
<path d="M1298 1027l8-7-2.500-2-5.500 5-5.500-5-2.500 2zM1298 1012v4" fill="#f4f4f2" stroke="#bbb"/>
<g fill="#eee" stroke="#444"><rect x="1335" y="1013" width="6" height="6"/><rect x="1342" y="1021" width="6" height="6"/></g>
<path d="M1337 1022v3h3" fill="none" stroke="#444"/>
<path d="M1363 1014h6l2 2h8v11h-16z" fill="#9cbf90" stroke="#88a880"/>
<path d="M1395 1014h6l2 2h3v4h3l-2 7h-12z" fill="#aac2a2" stroke="#7a9a78"/>
<circle cx="1429" cy="1020" r="6.800" fill="#eee" stroke="#d8707c" stroke-width="2.400"/><path d="M1426 1017l6 6m0-6-6 6" stroke="#999" stroke-width="1.600"/>
<g transform="translate(1472,1020)" fill="none" stroke="#c8626f" stroke-width="1.500"><circle cx="-4" cy="5" r="2.800"/><circle cx="4" cy="5" r="2.800"/><path d="M-3 2 4-7M3 2-4-7" stroke="#bbb" stroke-width="1.300"/></g>
<g transform="translate(1501,1020)" fill="#f4f4f2" stroke="#aaa"><rect x="-8" y="-7" width="10" height="10"/><rect x="-2" y="-1" width="10" height="10"/></g>
<g transform="translate(1530,1020)"><rect x="-7" y="-6" width="13" height="14" fill="#e6dcb0" stroke="#b8aa80"/><rect x="-4" y="-8" width="7" height="3" fill="#ddd" stroke="#888"/><rect x="-1" y="-3" width="8" height="10" fill="#f4f4f2" stroke="#bbb"/></g>

<!-- frame -->
<rect width="1609" height="1" fill="#444"/>
<rect y="1038" width="1609" height="2" fill="#333"/>
<rect width="1" height="1040" fill="#aaa"/>
<rect x="1608" width="1" height="1040" fill="#bbb"/>

<!-- watermark -->
<text x="740" y="1030" textLength="129" lengthAdjust="spacingAndGlyphs" style="font-size:22px;fill:#333;stroke:#222;stroke-width:3.200;stroke-linejoin:round">NaNaMe Club</text>
<text x="740" y="1030" textLength="129" lengthAdjust="spacingAndGlyphs" style="font-size:22px;fill:#333;stroke:#fff;stroke-width:1.600;stroke-linejoin:round">NaNaMe Club</text>
</svg>
</body></html>
